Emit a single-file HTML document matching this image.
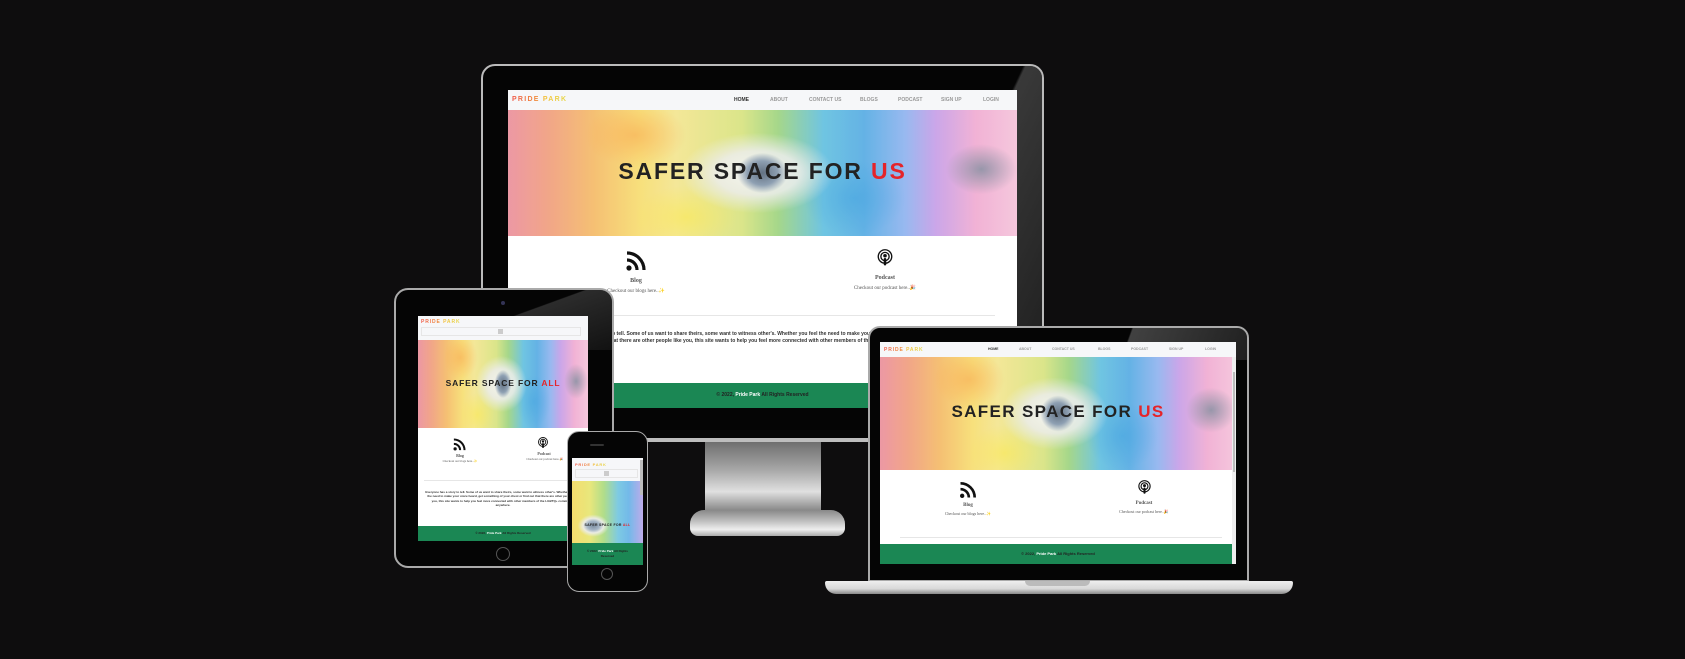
<!DOCTYPE html>
<html><head><meta charset="utf-8"><style>
*{margin:0;padding:0;box-sizing:border-box}
body{width:1685px;height:659px;background:#0e0d0e;position:relative;overflow:hidden;font-family:"Liberation Sans",sans-serif}
.a{position:absolute}
.scr{position:absolute;background:#fff;overflow:hidden}
.nav{position:absolute;left:0;right:0;top:0;background:#f6f7f9}
.logo{position:absolute;font-weight:bold;letter-spacing:.18em;background:linear-gradient(90deg,#ef5a4a,#f08a3a 45%,#f2c23a 60%,#e6d84a);-webkit-background-clip:text;color:transparent;white-space:nowrap}
.hero{position:absolute;left:0;right:0;overflow:hidden;
background:
radial-gradient(ellipse 5% 16% at 50% 50%,#4e5f72 0,#7f93a8 60%,rgba(150,165,180,0) 100%),
radial-gradient(ellipse 15% 32% at 49% 50%,rgba(245,245,245,.95) 0,rgba(235,235,235,.85) 55%,rgba(235,235,235,0) 100%),
radial-gradient(ellipse 7% 20% at 93% 47%,rgba(120,130,150,.85),rgba(220,200,220,0) 100%),
radial-gradient(ellipse 10% 25% at 25% 20%,rgba(250,160,60,.6),rgba(250,160,60,0)),
radial-gradient(ellipse 10% 25% at 35% 85%,rgba(250,230,60,.6),rgba(250,230,60,0)),
radial-gradient(ellipse 10% 30% at 68% 70%,rgba(40,150,220,.5),rgba(40,150,220,0)),
linear-gradient(90deg,#ea8a98 0%,#f09a78 8%,#f4b860 17%,#f6dc6a 26%,#f3e48a 33%,#d6e27a 46%,#9ad27a 53%,#5cbddf 62%,#4fa8e2 70%,#8ab0ee 78%,#c49ae6 84%,#f0a8d0 92%,#f4c0d8 100%)}
.hero::after{content:"";position:absolute;inset:0;background:rgba(255,255,255,.12)}
.title{position:absolute;left:0;right:0;text-align:center;font-weight:bold;color:#222;letter-spacing:.08em;z-index:2;white-space:nowrap}
.title span{color:#e5242a}
.green{position:absolute;left:0;right:0;background:#1b8754;text-align:center;color:#222;font-weight:bold;white-space:nowrap}
.green b{color:#fff}
.navi{position:absolute;color:#999;font-weight:bold;white-space:nowrap}
.small{position:absolute;text-align:center;color:#555;white-space:nowrap;font-family:"Liberation Serif",serif}
.para{position:absolute;text-align:center;color:#333;font-weight:bold;line-height:1.45}
.line{position:absolute;height:1px;background:#e6e6e6}
</style></head><body>

<svg width="0" height="0" style="position:absolute"><defs>
<symbol id="rss" viewBox="0 0 24 24"><circle cx="5" cy="19" r="2.6" fill="#111"/><path d="M3 11a10 10 0 0 1 10 10M3 4a17 17 0 0 1 17 17" stroke="#111" stroke-width="3.2" fill="none"/></symbol>
<symbol id="pod" viewBox="0 0 24 24"><circle cx="12" cy="10" r="9" fill="none" stroke="#111" stroke-width="1.8"/><circle cx="12" cy="10" r="5.5" fill="none" stroke="#111" stroke-width="1.8"/><circle cx="12" cy="9" r="2.4" fill="#111"/><rect x="10.3" y="12" width="3.4" height="10" rx="1.6" fill="#111"/></symbol>
</defs></svg>

<!-- DESKTOP MONITOR -->
<div class="a" style="left:481px;top:64px;width:563px;height:378px;background:#050505;border:2px solid #bbb;border-radius:14px"></div>
<div class="a" style="left:940px;top:66px;width:102px;height:375px;background:linear-gradient(115deg,rgba(0,0,0,0) 30%,rgba(70,70,70,.8) 31%,rgba(40,40,40,.6));border-radius:0 12px 12px 0"></div>
<div class="a" style="left:481px;top:438px;width:563px;height:4px;background:#bdbdbd"></div>
<div class="a" style="left:705px;top:442px;width:116px;height:80px;background:linear-gradient(#6e6e6e,#a8a8a8 35%,#e0e0e0 62%,#8a8a8a 85%,#aaa)"></div>
<div class="a" style="left:690px;top:510px;width:155px;height:26px;background:linear-gradient(#888,#bbb 40%,#eee 75%,#aaa);border-radius:14px 14px 8px 8px"></div>

<div class="scr" style="left:508px;top:90px;width:509px;height:318px">
 <div class="nav" style="height:20px"><div class="logo" style="left:4px;top:6px;font-size:7px">PRIDE PARK</div>
  <div class="navi" style="left:226px;top:7px;font-size:5px;color:#333">HOME</div>
  <div class="navi" style="left:262px;top:7px;font-size:5px">ABOUT</div>
  <div class="navi" style="left:301px;top:7px;font-size:5px">CONTACT US</div>
  <div class="navi" style="left:352px;top:7px;font-size:5px">BLOGS</div>
  <div class="navi" style="left:390px;top:7px;font-size:5px">PODCAST</div>
  <div class="navi" style="left:433px;top:7px;font-size:5px">SIGN UP</div>
  <div class="navi" style="left:475px;top:7px;font-size:5px">LOGIN</div></div>
 <div class="hero" style="top:20px;height:126px"><div class="title" style="top:48px;font-size:23px">SAFER SPACE FOR <span>US</span></div></div>
 <svg class="a" style="left:116px;top:159px" width="24" height="24"><use href="#rss"/></svg>
 <div class="small" style="left:96px;top:188px;width:64px;font-size:6px;font-weight:bold">Blog</div>
 <div class="small" style="left:70px;top:198px;width:116px;font-size:5px">Checkout our blogs here..✨</div>
 <svg class="a" style="left:368px;top:159px" width="18" height="18"><use href="#pod"/></svg>
 <div class="small" style="left:340px;top:185px;width:74px;font-size:6px;font-weight:bold">Podcast</div>
 <div class="small" style="left:318px;top:195px;width:118px;font-size:5px">Checkout our podcast here..🎉</div>
 <div class="line" style="left:22px;right:22px;top:225px"></div>
 <div class="para" style="left:50px;width:420px;top:241px;font-size:5px">Everyone has a story to tell. Some of us want to share theirs, some want to witness other's. Whether you feel the need to make your voice heard, get something of your chest or find out that there are other people like you, this site wants to help you feel more connected with other members of the LGBTQ+ community anywhere.</div>
 <div class="green" style="top:293px;height:25px;font-size:5px;line-height:25px">© 2022, <b>Pride Park</b> All Rights Reserved</div>
</div>

<!-- TABLET -->
<div class="a" style="left:394px;top:288px;width:220px;height:280px;background:#050505;border:2px solid #aaa;border-radius:14px"></div>
<div class="a" style="left:480px;top:290px;width:132px;height:60px;background:linear-gradient(160deg,rgba(0,0,0,0) 35%,rgba(60,60,60,.7) 36%,rgba(30,30,30,.5));border-radius:0 12px 0 0"></div>
<div class="a" style="left:501px;top:301px;width:4px;height:4px;border-radius:50%;background:#335"></div>
<div class="a" style="left:496px;top:547px;width:14px;height:14px;border-radius:50%;border:1px solid #555"></div>
<div class="scr" style="left:418px;top:316px;width:170px;height:225px">
 <div class="nav" style="height:24px"><div class="logo" style="left:3px;top:3px;font-size:5px">PRIDE PARK</div>
  <div class="a" style="left:3px;top:11px;width:160px;height:9px;border:1px solid #e6e6e6"></div>
  <div class="a" style="left:80px;top:13px;width:5px;height:5px;background:#ccc"></div></div>
 <div class="hero" style="top:24px;height:88px"><div class="title" style="top:38px;font-size:8.5px;letter-spacing:.1em">SAFER SPACE FOR <span>ALL</span></div></div>
 <svg class="a" style="left:34px;top:121px" width="15" height="15"><use href="#rss"/></svg>
 <div class="small" style="left:20px;top:137px;width:44px;font-size:4px;font-weight:bold">Blog</div>
 <div class="small" style="left:10px;top:143px;width:64px;font-size:3px">Checkout our blogs here..✨</div>
 <svg class="a" style="left:119px;top:121px" width="12" height="12"><use href="#pod"/></svg>
 <div class="small" style="left:104px;top:135px;width:44px;font-size:4px;font-weight:bold">Podcast</div>
 <div class="small" style="left:92px;top:141px;width:70px;font-size:3px">Checkout our podcast here..🎉</div>
 <div class="line" style="left:6px;right:6px;top:164px"></div>
 <div class="para" style="left:6px;width:158px;top:174px;font-size:3px">Everyone has a story to tell. Some of us want to share theirs, some want to witness other's. Whether you feel the need to make your voice heard, get something of your chest or find out that there are other people like you, this site wants to help you feel more connected with other members of the LGBTQ+ community anywhere.</div>
 <div class="green" style="top:210px;height:15px;font-size:3px;line-height:15px">© 2022, <b>Pride Park</b> All Rights Reserved</div>
</div>

<!-- PHONE -->
<div class="a" style="left:567px;top:431px;width:81px;height:161px;background:#050505;border:1.5px solid #aaa;border-radius:12px"></div>
<div class="a" style="left:590px;top:444px;width:14px;height:2px;background:#333;border-radius:1px"></div>
<div class="a" style="left:601px;top:568px;width:12px;height:12px;border-radius:50%;border:1px solid #555"></div>
<div class="scr" style="left:572px;top:458px;width:71px;height:107px">
 <div class="nav" style="height:23px"><div class="logo" style="left:3px;top:4px;font-size:4px">PRIDE PARK</div>
  <div class="a" style="left:3px;top:11px;width:63px;height:9px;border:1px solid #e6e6e6"></div>
  <div class="a" style="left:32px;top:13px;width:5px;height:5px;background:#ccc"></div></div>
 <div class="hero" style="top:23px;height:62px;background:radial-gradient(ellipse 22% 18% at 30% 72%,#6a7d92 0,#9aacbf 40%,rgba(235,235,235,.9) 65%,rgba(235,235,235,0) 100%),linear-gradient(90deg,#f3d85a 0%,#e6e46a 25%,#a6d97a 45%,#6cc3e0 65%,#60b0e6 80%,#b6a0e8 100%)"><div class="title" style="top:42px;font-size:3.5px">SAFER SPACE FOR <span>ALL</span></div></div>
 <div class="green" style="top:85px;height:22px;font-size:3px;line-height:5px;padding-top:6px">© 2022, <b>Pride Park</b> All Rights<br>Reserved</div>
 <div class="a" style="right:0;top:2px;width:3px;height:35px;background:#bbb"></div>
</div>

<!-- LAPTOP -->
<div class="a" style="left:868px;top:326px;width:381px;height:256px;background:#050505;border:2px solid #aaa;border-radius:12px 12px 0 0"></div>
<div class="a" style="left:1100px;top:328px;width:147px;height:32px;background:linear-gradient(110deg,rgba(0,0,0,0) 20%,rgba(80,80,80,.8) 21%,rgba(50,50,50,.6));border-radius:0 10px 0 0"></div>
<div class="a" style="left:825px;top:581px;width:468px;height:13px;background:linear-gradient(#eee,#d8d8d8 60%,#888);border-radius:2px 2px 12px 12px"></div>
<div class="a" style="left:1025px;top:581px;width:65px;height:5px;background:#bbb;border-radius:0 0 5px 5px"></div>
<div class="scr" style="left:880px;top:342px;width:356px;height:222px">
 <div class="nav" style="height:15px"><div class="logo" style="left:4px;top:5px;font-size:5px">PRIDE PARK</div>
  <div class="navi" style="left:108px;top:5px;font-size:3.5px;color:#333">HOME</div>
  <div class="navi" style="left:139px;top:5px;font-size:3.5px">ABOUT</div>
  <div class="navi" style="left:172px;top:5px;font-size:3.5px">CONTACT US</div>
  <div class="navi" style="left:218px;top:5px;font-size:3.5px">BLOGS</div>
  <div class="navi" style="left:251px;top:5px;font-size:3.5px">PODCAST</div>
  <div class="navi" style="left:289px;top:5px;font-size:3.5px">SIGN UP</div>
  <div class="navi" style="left:325px;top:5px;font-size:3.5px">LOGIN</div></div>
 <div class="hero" style="top:15px;height:113px"><div class="title" style="top:45px;font-size:17px">SAFER SPACE FOR <span>US</span></div></div>
 <svg class="a" style="left:78px;top:138px" width="20" height="20"><use href="#rss"/></svg>
 <div class="small" style="left:58px;top:161px;width:60px;font-size:5px;font-weight:bold">Blog</div>
 <div class="small" style="left:40px;top:169px;width:96px;font-size:4px">Checkout our blogs here..✨</div>
 <svg class="a" style="left:257px;top:138px" width="15" height="15"><use href="#pod"/></svg>
 <div class="small" style="left:234px;top:159px;width:60px;font-size:5px;font-weight:bold">Podcast</div>
 <div class="small" style="left:214px;top:167px;width:100px;font-size:4px">Checkout our podcast here..🎉</div>
 <div class="line" style="left:20px;right:14px;top:195px"></div>
 <div class="green" style="top:202px;height:20px;font-size:4px;line-height:20px">© 2022, <b>Pride Park</b> All Rights Reserved</div>
 <div class="a" style="right:0;top:15px;width:4px;height:207px;background:#eee"></div>
 <div class="a" style="right:1px;top:30px;width:2px;height:100px;background:#bbb"></div>
</div>
</body></html>
